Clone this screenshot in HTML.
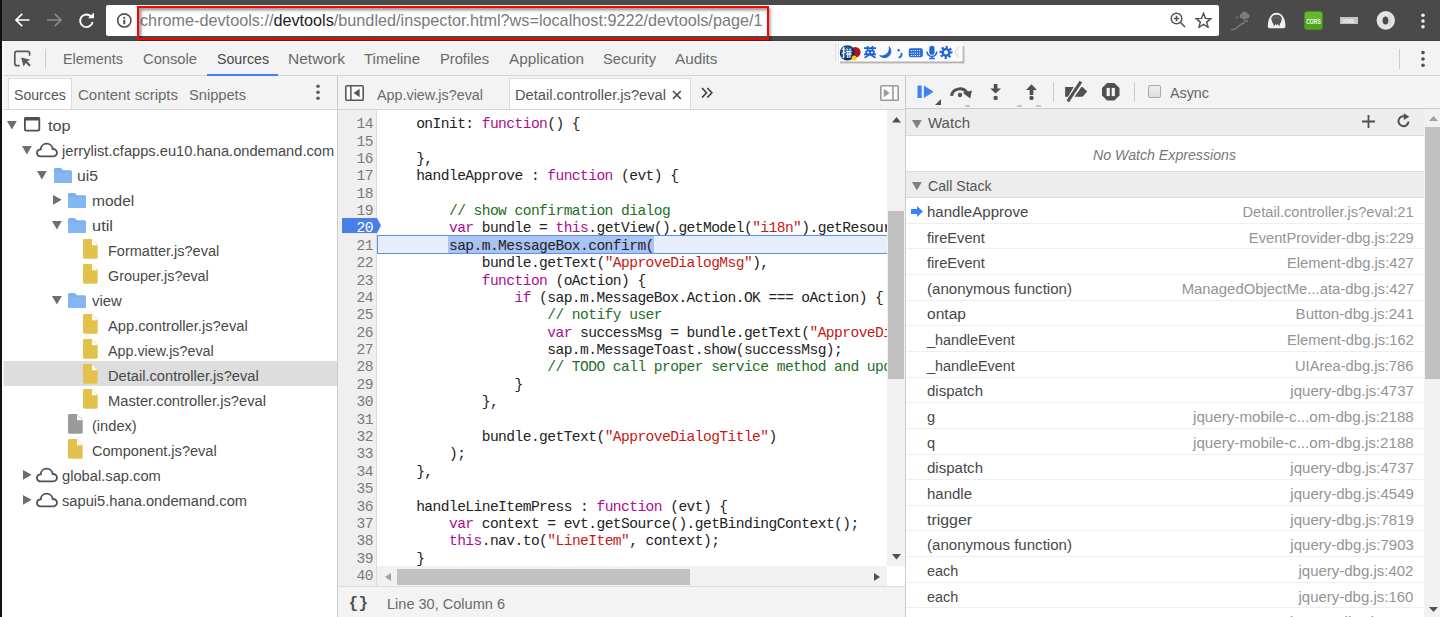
<!DOCTYPE html>
<html><head><meta charset="utf-8"><style>
html,body{margin:0;padding:0;}
body{width:1440px;height:617px;position:relative;overflow:hidden;background:#f3f3f3;font-family:'Liberation Sans', sans-serif;}
</style></head><body>
<div style="position:absolute;left:0px;top:0px;width:1440px;height:41px;background:#4a4a4a"></div>
<div style="position:absolute;left:0px;top:40px;width:1440px;height:1px;background:#3d3d3d"></div>
<svg style="position:absolute;left:14px;top:12px;" width="17" height="16" viewBox="0 0 17 16"><path d="M15.5 8H2M8.2 1.8L2 8l6.2 6.2" stroke="#fff" stroke-width="1.7" fill="none"/></svg>
<svg style="position:absolute;left:46px;top:12px;" width="17" height="16" viewBox="0 0 17 16"><path d="M1 8h13.5M8.8 1.8L15 8l-6.2 6.2" stroke="#8a8a8a" stroke-width="1.7" fill="none"/></svg>
<svg style="position:absolute;left:78px;top:12px;" width="17" height="17" viewBox="0 0 17 17"><path d="M13.6 5.2A6.3 6.3 0 1 0 14.6 10" stroke="#fff" stroke-width="1.8" fill="none"/><path d="M10 6.2h6V0.6z" fill="#fff"/></svg>
<div style="position:absolute;left:106px;top:5px;width:1113px;height:31px;background:#fff;border-radius:2px"></div>
<svg style="position:absolute;left:116px;top:12px;" width="17" height="17" viewBox="0 0 17 17"><circle cx="8.3" cy="8.4" r="6.6" stroke="#555" stroke-width="1.7" fill="none"/><rect x="7.2" y="7.8" width="2.1" height="4.4" fill="#555"/><rect x="7.2" y="4.9" width="2.1" height="1.8" fill="#555"/></svg>
<div style="position:absolute;left:139.5px;top:11.14px;line-height:18.10px;font-size:16.2px;font-family:'Liberation Sans', sans-serif;color:#333;white-space:pre;;transform:scaleX(1.0018);transform-origin:left center;"><span style="color:#7a7a7a">chrome-devtools://</span><span style="color:#222">devtools</span><span style="color:#7a7a7a">/bundled/inspector.html?ws=localhost:9222/devtools/page/1</span></div>
<div style="position:absolute;left:137px;top:5.8px;width:632px;height:34px;box-sizing:border-box;border:2.5px solid #f00;box-shadow:inset 2.5px 2.5px 2.5px rgba(0,0,0,.38),1.5px 1.5px 2px rgba(0,0,0,.3)"></div>
<svg style="position:absolute;left:1170px;top:12px;" width="16" height="17" viewBox="0 0 16 17"><circle cx="6.5" cy="6.5" r="5.3" stroke="#555" stroke-width="1.5" fill="none"/><path d="M10.3 10.3L15 15M6.5 3.8v5.4M3.8 6.5h5.4" stroke="#555" stroke-width="1.6"/></svg>
<svg style="position:absolute;left:1195px;top:12px;" width="17" height="16" viewBox="0 0 17 16"><path d="M8.5 1.3l2 5.1 5.4.3-4.2 3.4 1.4 5.2-4.6-3-4.6 3 1.4-5.2L1.1 6.7l5.4-.3z" stroke="#555" stroke-width="1.5" fill="none" stroke-linejoin="miter"/></svg>
<svg style="position:absolute;left:1229px;top:9px;" width="24" height="24" viewBox="0 0 24 24"><path d="M2 20.5C5 21 7 20 9 18S12 14.5 15.5 14" stroke="#7a7a7a" stroke-width="1.3" fill="none"/><path d="M15.5 8.5V14" stroke="#7a7a7a" stroke-width="1.2"/><circle cx="15.6" cy="5.2" r="2.7" fill="#7c7c7c"/><circle cx="13.2" cy="7" r="2.5" fill="#7c7c7c"/><circle cx="18" cy="7" r="2.5" fill="#7c7c7c"/><circle cx="15.6" cy="8" r="2.4" fill="#7c7c7c"/><circle cx="17.8" cy="12" r="1.3" fill="#777"/><circle cx="8" cy="8.6" r="1.1" fill="#777"/></svg>
<svg style="position:absolute;left:1267px;top:12px;" width="20" height="17" viewBox="0 0 20 17"><path d="M0.8 14.5C0.6 6 4.5 0.8 9.6 0.8S18.6 6 18.4 14.5Q18.4 16.3 16.6 16.3H2.6Q0.8 16.3 0.8 14.5z" fill="#f0f0f0"/><path d="M4.2 6.5C5 3.6 7 2.8 9.6 2.8S14.2 3.6 15 6.5L14 10Q12.8 11.5 12.2 14.5L10.8 12 9.6 13.5 8.4 12 7 14.5Q6.4 11.5 5.2 10z" fill="#555"/><path d="M4.6 6.5Q9.6 4.6 14.6 6.5" stroke="#6a6a6a" stroke-width="1" fill="none"/></svg>
<svg style="position:absolute;left:1303.5px;top:10.5px;" width="19" height="19" viewBox="0 0 19 19"><rect x="0.3" y="0.3" width="18.4" height="18.4" rx="3" fill="#4ea51c"/><rect x="1" y="1" width="17" height="8" rx="2.5" fill="#62b82e"/><text x="9.5" y="12.6" font-family="Liberation Sans" font-size="7.5" font-weight="bold" fill="#fff" text-anchor="middle" textLength="14.5" lengthAdjust="spacingAndGlyphs">CORS</text></svg>
<svg style="position:absolute;left:1340px;top:16.8px;" width="18.2" height="7" viewBox="0 0 18.2 7"><rect x="0" y="0" width="18.2" height="7" fill="#c4c4c4"/><text x="9.1" y="6" font-family="Liberation Sans" font-size="6" font-weight="bold" fill="#f0f0f0" text-anchor="middle" textLength="13" lengthAdjust="spacingAndGlyphs">XML</text></svg>
<svg style="position:absolute;left:1376px;top:11px;" width="20" height="20" viewBox="0 0 20 20"><ellipse cx="9.75" cy="9.45" rx="9.15" ry="9.35" fill="#e4e4e4"/><ellipse cx="9.5" cy="9.5" rx="2.9" ry="4.1" fill="#4a4a4a"/><path d="M13 3.5Q16 9.5 13 15.5" stroke="#cfcfcf" stroke-width="1.2" fill="none"/></svg>
<svg style="position:absolute;left:1419.5px;top:12px;" width="6" height="18" viewBox="0 0 6 18"><circle cx="3" cy="3.3" r="1.75" fill="#f4f4f4"/><circle cx="3" cy="9" r="1.75" fill="#f4f4f4"/><circle cx="3" cy="14.8" r="1.75" fill="#f4f4f4"/></svg>
<div style="position:absolute;left:0px;top:41px;width:1440px;height:35px;background:#f3f3f3"></div>
<div style="position:absolute;left:0px;top:75px;width:1440px;height:1.8px;background:#d6d6d6"></div>
<svg style="position:absolute;left:13px;top:50px;" width="20" height="19" viewBox="0 0 20 19"><path d="M6.7 15.6H3.8Q1.8 15.6 1.8 13.6V3.3Q1.8 1.3 3.8 1.3H14.6Q16.6 1.3 16.6 3.3V5.7" stroke="#5a5a5a" stroke-width="1.7" fill="none"/><path d="M8.1 7.6L17.4 9.8L14.2 11.3L17.8 14.9L16.3 16.5L12.7 12.9L10.6 16.8z" fill="#5a5a5a"/></svg>
<div style="position:absolute;left:45px;top:49px;width:1px;height:20px;background:#ccc"></div>
<div style="position:absolute;left:62.5px;top:50.15px;line-height:17.09px;font-size:15.3px;font-family:'Liberation Sans', sans-serif;color:#6a6a6a;white-space:pre;;transform:scaleX(0.9410);transform-origin:left center;">Elements</div>
<div style="position:absolute;left:142.5px;top:50.15px;line-height:17.09px;font-size:15.3px;font-family:'Liberation Sans', sans-serif;color:#6a6a6a;white-space:pre;;transform:scaleX(0.9622);transform-origin:left center;">Console</div>
<div style="position:absolute;left:216.5px;top:50.15px;line-height:17.09px;font-size:15.3px;font-family:'Liberation Sans', sans-serif;color:#484848;white-space:pre;;transform:scaleX(0.9267);transform-origin:left center;">Sources</div>
<div style="position:absolute;left:287.5px;top:50.15px;line-height:17.09px;font-size:15.3px;font-family:'Liberation Sans', sans-serif;color:#6a6a6a;white-space:pre;;transform:scaleX(1.0160);transform-origin:left center;">Network</div>
<div style="position:absolute;left:363.5px;top:50.15px;line-height:17.09px;font-size:15.3px;font-family:'Liberation Sans', sans-serif;color:#6a6a6a;white-space:pre;;transform:scaleX(0.9784);transform-origin:left center;">Timeline</div>
<div style="position:absolute;left:439.5px;top:50.15px;line-height:17.09px;font-size:15.3px;font-family:'Liberation Sans', sans-serif;color:#6a6a6a;white-space:pre;;transform:scaleX(0.9607);transform-origin:left center;">Profiles</div>
<div style="position:absolute;left:508.5px;top:50.15px;line-height:17.09px;font-size:15.3px;font-family:'Liberation Sans', sans-serif;color:#6a6a6a;white-space:pre;;transform:scaleX(1.0022);transform-origin:left center;">Application</div>
<div style="position:absolute;left:602.5px;top:50.15px;line-height:17.09px;font-size:15.3px;font-family:'Liberation Sans', sans-serif;color:#6a6a6a;white-space:pre;;transform:scaleX(0.9592);transform-origin:left center;">Security</div>
<div style="position:absolute;left:675.0px;top:50.15px;line-height:17.09px;font-size:15.3px;font-family:'Liberation Sans', sans-serif;color:#6a6a6a;white-space:pre;;transform:scaleX(0.9997);transform-origin:left center;">Audits</div>
<div style="position:absolute;left:207px;top:74px;width:71px;height:2px;background:#3e82f7"></div>
<div style="position:absolute;left:1398.5px;top:49px;width:1.5px;height:19.5px;background:#ccc"></div>
<svg style="position:absolute;left:1420.4px;top:50px;" width="6" height="18" viewBox="0 0 6 18"><circle cx="3" cy="2.6" r="1.8" fill="#505050"/><circle cx="3" cy="9" r="1.8" fill="#505050"/><circle cx="3" cy="15.3" r="1.8" fill="#505050"/></svg>
<svg style="position:absolute;left:834px;top:40px;" width="132" height="26" viewBox="0 0 132 26"><rect x="6" y="21.2" width="123" height="2.2" fill="#8a8a8a" opacity=".6"/><rect x="128.3" y="6" width="2.2" height="17.4" fill="#8a8a8a" opacity=".5"/>
<rect x="1.5" y="2.9" width="126.8" height="18.5" fill="#fbfbfb"/><rect x="1.5" y="2.9" width="0.8" height="18.5" fill="#d0d0d0"/><rect x="4.2" y="4" width="0.8" height="16" fill="#dddddd"/>
<circle cx="21.4" cy="12.2" r="5.2" fill="#b5121b"/><circle cx="13.4" cy="12.9" r="7.6" fill="#0f2f63"/><circle cx="12.6" cy="12" r="6" fill="#2a5a9a"/>
<path d="M8 9.2H11.2M9.7 7V17.5L8.5 16.8M8 13.4L11.5 12M12.6 8.6L13.6 10M16.6 8.6L15.6 10M12 11.2H17.6M12 14H17.6M13.8 11.2V18M15.9 11.2V18" stroke="#fff" stroke-width="1.1" fill="none"/><circle cx="20.2" cy="18" r="2.5" fill="#f5d200"/>
<path d="M30 8.2H42M33.6 6V10.3M38.4 6V10.3M32.2 11V14.2H39.8V11H32.2M36 9.6V14.2M30 14.4H42M36 14.4L30.6 17.8M36 14.4L41.6 17.8" stroke="#1a5fd6" stroke-width="1.7" fill="none"/>
<path d="M55.2 6.8A6.2 6.2 0 0 1 45.7 15.6A7.6 7.6 0 0 0 55.2 6.8Z" fill="#1f66dc" stroke="#1f66dc" stroke-width="0.9" stroke-linejoin="round"/>
<circle cx="64.7" cy="10.2" r="1.2" fill="#1f66dc"/><path d="M67.5 13.6Q67.8 16.5 65.4 17.4" stroke="#1f66dc" stroke-width="1.8" fill="none" stroke-linecap="round"/>
<rect x="74.8" y="8.3" width="14" height="9" rx="1.8" fill="#1f66dc"/><path d="M76.6 10.6h10.4M76.6 13.2h10.4M76.6 15.6h10.4" stroke="#fff" stroke-width="1" stroke-dasharray="1.2 0.9"/>
<rect x="95.3" y="5.8" width="5.2" height="9" rx="2.6" fill="#1f66dc"/><path d="M93 11.6A4.9 4.9 0 0 0 102.8 11.6M97.9 16.5v1.8M95 18.5h5.8" stroke="#1f66dc" stroke-width="1.5" fill="none"/>
<circle cx="112" cy="12.4" r="5.2" stroke="#1f66dc" stroke-width="2.6" fill="none" stroke-dasharray="2.1 1.98" transform="rotate(-11 112 12.4)"/><circle cx="112" cy="12.4" r="3.3" stroke="#1f66dc" stroke-width="2.4" fill="none"/>
<path d="M125 6L120.2 12.4L125 18.5" fill="#efefef" stroke="#d6d6d6" stroke-width="0.7"/></svg>
<div style="position:absolute;left:0px;top:76px;width:338px;height:541px;background:#fff"></div>
<div style="position:absolute;left:0px;top:76px;width:337px;height:34px;background:#f3f3f3"></div>
<div style="position:absolute;left:8px;top:78.3px;width:64px;height:31px;background:#fff;border:1px solid #dcdcdc;border-bottom:none;box-sizing:border-box"></div>
<div style="position:absolute;left:0px;top:108.6px;width:337px;height:1.4px;background:#d6d6d6"></div>
<div style="position:absolute;left:14.1px;top:85.95px;line-height:17.09px;font-size:15.3px;font-family:'Liberation Sans', sans-serif;color:#555;white-space:pre;;transform:scaleX(0.9231);transform-origin:left center;">Sources</div>
<div style="position:absolute;left:77.5px;top:85.95px;line-height:17.09px;font-size:15.3px;font-family:'Liberation Sans', sans-serif;color:#6a6a6a;white-space:pre;;transform:scaleX(0.9802);transform-origin:left center;">Content scripts</div>
<div style="position:absolute;left:188.5px;top:85.95px;line-height:17.09px;font-size:15.3px;font-family:'Liberation Sans', sans-serif;color:#6a6a6a;white-space:pre;;transform:scaleX(0.9575);transform-origin:left center;">Snippets</div>
<svg style="position:absolute;left:315px;top:84px;" width="6" height="17" viewBox="0 0 6 17"><circle cx="3" cy="2.3" r="1.8" fill="#5a5a5a"/><circle cx="3" cy="8.3" r="1.8" fill="#5a5a5a"/><circle cx="3" cy="14.3" r="1.8" fill="#5a5a5a"/></svg>
<div style="position:absolute;left:337px;top:76px;width:1px;height:541px;background:#ccc"></div>
<div style="position:absolute;left:3px;top:361px;width:334px;height:25px;background:#dddddd"></div>
<svg style="position:absolute;left:7.4px;top:121px;" width="10" height="9" viewBox="0 0 10 9"><path d="M0 0H9.8L4.9 8.5z" fill="#6e6e6e"/></svg>
<svg style="position:absolute;left:23.9px;top:117.3px;" width="17" height="15" viewBox="0 0 17 15"><rect x="0.9" y="0.9" width="14.4" height="12.8" rx="1.6" stroke="#505050" stroke-width="1.8" fill="none"/><rect x="0" y="0" width="16.2" height="3.4" rx="1.6" fill="#505050"/></svg>
<div style="position:absolute;left:47.6px;top:117.15px;line-height:17.09px;font-size:15.3px;font-family:'Liberation Sans', sans-serif;color:#484848;white-space:pre;;transform:scaleX(1.0675);transform-origin:left center;">top</div>
<svg style="position:absolute;left:22.4px;top:146px;" width="10" height="9" viewBox="0 0 10 9"><path d="M0 0H9.8L4.9 8.5z" fill="#6e6e6e"/></svg>
<svg style="position:absolute;left:34.5px;top:141.5px;" width="24" height="17" viewBox="0 0 24 17"><path d="M5.4 14.4H18.3A3.7 3.7 0 1 0 17.67 7.05A6 6 0 0 0 5.71 7.41A3.5 3.5 0 1 0 5.4 14.4Z" stroke="#505050" stroke-width="1.8" fill="none"/></svg>
<div style="position:absolute;left:61.5px;top:142.15px;line-height:17.09px;font-size:15.3px;font-family:'Liberation Sans', sans-serif;color:#484848;white-space:pre;;transform:scaleX(0.9584);transform-origin:left center;">jerrylist.cfapps.eu10.hana.ondemand.com</div>
<svg style="position:absolute;left:37.4px;top:171px;" width="10" height="9" viewBox="0 0 10 9"><path d="M0 0H9.8L4.9 8.5z" fill="#6e6e6e"/></svg>
<svg style="position:absolute;left:54.4px;top:168px;" width="18" height="15" viewBox="0 0 18 15"><path d="M0 1.6Q0 0 1.6 0H6.2Q7 0 7.5 0.6L8.8 2.2H16.4Q18 2.2 18 3.8V13.4Q18 15 16.4 15H1.6Q0 15 0 13.4z" fill="#7db0ee"/><path d="M0 4.2h18v9.2q0 1.6-1.6 1.6h-14.8Q0 15 0 13.4z" fill="#84b7f1"/></svg>
<div style="position:absolute;left:76.8px;top:167.15px;line-height:17.09px;font-size:15.3px;font-family:'Liberation Sans', sans-serif;color:#484848;white-space:pre;;transform:scaleX(1.0287);transform-origin:left center;">ui5</div>
<svg style="position:absolute;left:52.8px;top:194.8px;" width="9" height="10" viewBox="0 0 9 10"><path d="M0 0V9.7L8.7 4.85z" fill="#6e6e6e"/></svg>
<svg style="position:absolute;left:67.9px;top:193px;" width="18" height="15" viewBox="0 0 18 15"><path d="M0 1.6Q0 0 1.6 0H6.2Q7 0 7.5 0.6L8.8 2.2H16.4Q18 2.2 18 3.8V13.4Q18 15 16.4 15H1.6Q0 15 0 13.4z" fill="#7db0ee"/><path d="M0 4.2h18v9.2q0 1.6-1.6 1.6h-14.8Q0 15 0 13.4z" fill="#84b7f1"/></svg>
<div style="position:absolute;left:92.3px;top:192.15px;line-height:17.09px;font-size:15.3px;font-family:'Liberation Sans', sans-serif;color:#484848;white-space:pre;;transform:scaleX(1.0129);transform-origin:left center;">model</div>
<svg style="position:absolute;left:52.4px;top:221px;" width="10" height="9" viewBox="0 0 10 9"><path d="M0 0H9.8L4.9 8.5z" fill="#6e6e6e"/></svg>
<svg style="position:absolute;left:67.9px;top:218px;" width="18" height="15" viewBox="0 0 18 15"><path d="M0 1.6Q0 0 1.6 0H6.2Q7 0 7.5 0.6L8.8 2.2H16.4Q18 2.2 18 3.8V13.4Q18 15 16.4 15H1.6Q0 15 0 13.4z" fill="#7db0ee"/><path d="M0 4.2h18v9.2q0 1.6-1.6 1.6h-14.8Q0 15 0 13.4z" fill="#84b7f1"/></svg>
<div style="position:absolute;left:92.3px;top:217.15px;line-height:17.09px;font-size:15.3px;font-family:'Liberation Sans', sans-serif;color:#484848;white-space:pre;;transform:scaleX(1.0739);transform-origin:left center;">util</div>
<svg style="position:absolute;left:83.3px;top:239.2px;" width="15" height="20" viewBox="0 0 15 20"><path d="M1.4 0H9L14.7 5.7V18.3Q14.7 19.7 13.3 19.7H1.4Q0 19.7 0 18.3V1.4Q0 0 1.4 0z" fill="#e3c24c"/><path d="M9 0.2V6.2H14.6z" fill="#fff"/></svg>
<div style="position:absolute;left:107.5px;top:242.15px;line-height:17.09px;font-size:15.3px;font-family:'Liberation Sans', sans-serif;color:#484848;white-space:pre;;transform:scaleX(0.9478);transform-origin:left center;">Formatter.js?eval</div>
<svg style="position:absolute;left:83.3px;top:264.2px;" width="15" height="20" viewBox="0 0 15 20"><path d="M1.4 0H9L14.7 5.7V18.3Q14.7 19.7 13.3 19.7H1.4Q0 19.7 0 18.3V1.4Q0 0 1.4 0z" fill="#e3c24c"/><path d="M9 0.2V6.2H14.6z" fill="#fff"/></svg>
<div style="position:absolute;left:107.5px;top:267.15px;line-height:17.09px;font-size:15.3px;font-family:'Liberation Sans', sans-serif;color:#484848;white-space:pre;;transform:scaleX(0.9408);transform-origin:left center;">Grouper.js?eval</div>
<svg style="position:absolute;left:52.4px;top:296px;" width="10" height="9" viewBox="0 0 10 9"><path d="M0 0H9.8L4.9 8.5z" fill="#6e6e6e"/></svg>
<svg style="position:absolute;left:67.9px;top:293px;" width="18" height="15" viewBox="0 0 18 15"><path d="M0 1.6Q0 0 1.6 0H6.2Q7 0 7.5 0.6L8.8 2.2H16.4Q18 2.2 18 3.8V13.4Q18 15 16.4 15H1.6Q0 15 0 13.4z" fill="#7db0ee"/><path d="M0 4.2h18v9.2q0 1.6-1.6 1.6h-14.8Q0 15 0 13.4z" fill="#84b7f1"/></svg>
<div style="position:absolute;left:92.3px;top:292.15px;line-height:17.09px;font-size:15.3px;font-family:'Liberation Sans', sans-serif;color:#484848;white-space:pre;;transform:scaleX(0.9738);transform-origin:left center;">view</div>
<svg style="position:absolute;left:83.3px;top:314.2px;" width="15" height="20" viewBox="0 0 15 20"><path d="M1.4 0H9L14.7 5.7V18.3Q14.7 19.7 13.3 19.7H1.4Q0 19.7 0 18.3V1.4Q0 0 1.4 0z" fill="#e3c24c"/><path d="M9 0.2V6.2H14.6z" fill="#fff"/></svg>
<div style="position:absolute;left:107.5px;top:317.15px;line-height:17.09px;font-size:15.3px;font-family:'Liberation Sans', sans-serif;color:#484848;white-space:pre;;transform:scaleX(0.9608);transform-origin:left center;">App.controller.js?eval</div>
<svg style="position:absolute;left:83.3px;top:339.2px;" width="15" height="20" viewBox="0 0 15 20"><path d="M1.4 0H9L14.7 5.7V18.3Q14.7 19.7 13.3 19.7H1.4Q0 19.7 0 18.3V1.4Q0 0 1.4 0z" fill="#e3c24c"/><path d="M9 0.2V6.2H14.6z" fill="#fff"/></svg>
<div style="position:absolute;left:107.5px;top:342.15px;line-height:17.09px;font-size:15.3px;font-family:'Liberation Sans', sans-serif;color:#484848;white-space:pre;;transform:scaleX(0.9346);transform-origin:left center;">App.view.js?eval</div>
<svg style="position:absolute;left:83.3px;top:364.2px;" width="15" height="20" viewBox="0 0 15 20"><path d="M1.4 0H9L14.7 5.7V18.3Q14.7 19.7 13.3 19.7H1.4Q0 19.7 0 18.3V1.4Q0 0 1.4 0z" fill="#e3c24c"/><path d="M9 0.2V6.2H14.6z" fill="#fff"/></svg>
<div style="position:absolute;left:107.5px;top:367.15px;line-height:17.09px;font-size:15.3px;font-family:'Liberation Sans', sans-serif;color:#484848;white-space:pre;;transform:scaleX(0.9581);transform-origin:left center;">Detail.controller.js?eval</div>
<svg style="position:absolute;left:83.3px;top:389.2px;" width="15" height="20" viewBox="0 0 15 20"><path d="M1.4 0H9L14.7 5.7V18.3Q14.7 19.7 13.3 19.7H1.4Q0 19.7 0 18.3V1.4Q0 0 1.4 0z" fill="#e3c24c"/><path d="M9 0.2V6.2H14.6z" fill="#fff"/></svg>
<div style="position:absolute;left:107.5px;top:392.15px;line-height:17.09px;font-size:15.3px;font-family:'Liberation Sans', sans-serif;color:#484848;white-space:pre;;transform:scaleX(0.9629);transform-origin:left center;">Master.controller.js?eval</div>
<svg style="position:absolute;left:67.9px;top:414.2px;" width="15" height="20" viewBox="0 0 15 20"><path d="M1.4 0H9L14.7 5.7V18.3Q14.7 19.7 13.3 19.7H1.4Q0 19.7 0 18.3V1.4Q0 0 1.4 0z" fill="#9a9a9a"/><path d="M9 0.2V6.2H14.6z" fill="#fff"/></svg>
<div style="position:absolute;left:92.3px;top:417.15px;line-height:17.09px;font-size:15.3px;font-family:'Liberation Sans', sans-serif;color:#484848;white-space:pre;;transform:scaleX(0.9560);transform-origin:left center;">(index)</div>
<svg style="position:absolute;left:67.9px;top:439.2px;" width="15" height="20" viewBox="0 0 15 20"><path d="M1.4 0H9L14.7 5.7V18.3Q14.7 19.7 13.3 19.7H1.4Q0 19.7 0 18.3V1.4Q0 0 1.4 0z" fill="#e3c24c"/><path d="M9 0.2V6.2H14.6z" fill="#fff"/></svg>
<div style="position:absolute;left:92.3px;top:442.15px;line-height:17.09px;font-size:15.3px;font-family:'Liberation Sans', sans-serif;color:#484848;white-space:pre;;transform:scaleX(0.9523);transform-origin:left center;">Component.js?eval</div>
<svg style="position:absolute;left:22.799999999999997px;top:469.8px;" width="9" height="10" viewBox="0 0 9 10"><path d="M0 0V9.7L8.7 4.85z" fill="#6e6e6e"/></svg>
<svg style="position:absolute;left:34.5px;top:466.5px;" width="24" height="17" viewBox="0 0 24 17"><path d="M5.4 14.4H18.3A3.7 3.7 0 1 0 17.67 7.05A6 6 0 0 0 5.71 7.41A3.5 3.5 0 1 0 5.4 14.4Z" stroke="#505050" stroke-width="1.8" fill="none"/></svg>
<div style="position:absolute;left:62.2px;top:467.15px;line-height:17.09px;font-size:15.3px;font-family:'Liberation Sans', sans-serif;color:#484848;white-space:pre;;transform:scaleX(0.9603);transform-origin:left center;">global.sap.com</div>
<svg style="position:absolute;left:22.799999999999997px;top:494.8px;" width="9" height="10" viewBox="0 0 9 10"><path d="M0 0V9.7L8.7 4.85z" fill="#6e6e6e"/></svg>
<svg style="position:absolute;left:34.5px;top:491.5px;" width="24" height="17" viewBox="0 0 24 17"><path d="M5.4 14.4H18.3A3.7 3.7 0 1 0 17.67 7.05A6 6 0 0 0 5.71 7.41A3.5 3.5 0 1 0 5.4 14.4Z" stroke="#505050" stroke-width="1.8" fill="none"/></svg>
<div style="position:absolute;left:62.2px;top:492.15px;line-height:17.09px;font-size:15.3px;font-family:'Liberation Sans', sans-serif;color:#484848;white-space:pre;;transform:scaleX(0.9583);transform-origin:left center;">sapui5.hana.ondemand.com</div>
<div style="position:absolute;left:338px;top:76px;width:568px;height:34px;background:#f3f3f3"></div>
<svg style="position:absolute;left:345px;top:85px;" width="19" height="16" viewBox="0 0 19 16"><rect x="0.8" y="0.8" width="17.4" height="14.6" rx="1.3" stroke="#585858" stroke-width="1.6" fill="#fbfbfb"/><path d="M5.9 1v14" stroke="#585858" stroke-width="1.5"/><path d="M14.6 3.8v8.4L8.6 8z" fill="#585858"/></svg>
<div style="position:absolute;left:377.2px;top:85.85px;line-height:17.09px;font-size:15.3px;font-family:'Liberation Sans', sans-serif;color:#6a6a6a;white-space:pre;;transform:scaleX(0.9373);transform-origin:left center;">App.view.js?eval</div>
<div style="position:absolute;left:509px;top:78.3px;width:182px;height:31px;background:#fff;border:1px solid #dcdcdc;border-bottom:none;box-sizing:border-box"></div>
<div style="position:absolute;left:338px;top:108.6px;width:568px;height:1.4px;background:#d6d6d6"></div>
<div style="position:absolute;left:514.5px;top:85.85px;line-height:17.09px;font-size:15.3px;font-family:'Liberation Sans', sans-serif;color:#555;white-space:pre;;transform:scaleX(0.9600);transform-origin:left center;">Detail.controller.js?eval</div>
<svg style="position:absolute;left:672px;top:90px;" width="10" height="10" viewBox="0 0 10 10"><path d="M1 1l7.8 7.8M8.8 1L1 8.8" stroke="#505050" stroke-width="1.7"/></svg>
<svg style="position:absolute;left:700.5px;top:87px;" width="12" height="11" viewBox="0 0 12 11"><path d="M1 1l4.5 4.75-4.5 4.75M6.3 1l4.6 4.75-4.6 4.75" stroke="#444" stroke-width="1.7" fill="none"/></svg>
<svg style="position:absolute;left:880px;top:85px;" width="19" height="16" viewBox="0 0 19 16"><rect x="0.8" y="0.8" width="17.4" height="14.6" rx="1" stroke="#9c9c9c" stroke-width="1.6" fill="#fbfbfb"/><path d="M13 1v14" stroke="#9c9c9c" stroke-width="1.6"/><path d="M3.8 3.8v8.4L9.6 8z" fill="#9c9c9c"/></svg>
<div style="position:absolute;left:338px;top:110px;width:549px;height:476px;background:#fff"></div>
<div style="position:absolute;left:338px;top:110px;width:38px;height:476px;background:#efefef"></div>
<div style="position:absolute;left:376px;top:110px;width:1px;height:476px;background:#ddd"></div>
<div style="position:absolute;left:0;top:0;width:1440px;height:617px;overflow:hidden">
<div style="position:absolute;left:376.5px;top:235px;width:511px;height:19px;background:#e6eefc;border:1px solid #5a8ff0;box-sizing:border-box"></div>
<div style="position:absolute;left:448.3px;top:236px;width:206px;height:17px;background:#a9c3f3"></div>
<svg style="position:absolute;left:341.5px;top:218px;" width="40" height="16" viewBox="0 0 40 16"><path d="M0 0H35L39 7.5L35 15H0z" fill="#4b7fe8"/></svg>
</div>
<div style="position:absolute;left:338px;top:110px;width:549px;height:476px;overflow:hidden">
<div style="position:absolute;left:4.5px;top:6.15px;line-height:16.53px;font-size:14.6px;font-family:'Liberation Mono', monospace;color:#7a7a7a;white-space:pre;width:30.5px;text-align:right;letter-spacing:-0.564px">14</div>
<div style="position:absolute;left:45.39999999999998px;top:6.15px;line-height:16.53px;font-size:14.6px;font-family:'Liberation Mono', monospace;color:#222;white-space:pre;;letter-spacing:-0.564px"><span style="color:#222">    onInit: </span><span style="color:#aa0d91">function</span><span style="color:#222">() {</span></div>
<div style="position:absolute;left:4.5px;top:23.53px;line-height:16.53px;font-size:14.6px;font-family:'Liberation Mono', monospace;color:#7a7a7a;white-space:pre;width:30.5px;text-align:right;letter-spacing:-0.564px">15</div>
<div style="position:absolute;left:4.5px;top:40.91px;line-height:16.53px;font-size:14.6px;font-family:'Liberation Mono', monospace;color:#7a7a7a;white-space:pre;width:30.5px;text-align:right;letter-spacing:-0.564px">16</div>
<div style="position:absolute;left:45.39999999999998px;top:40.91px;line-height:16.53px;font-size:14.6px;font-family:'Liberation Mono', monospace;color:#222;white-space:pre;;letter-spacing:-0.564px"><span style="color:#222">    },</span></div>
<div style="position:absolute;left:4.5px;top:58.29px;line-height:16.53px;font-size:14.6px;font-family:'Liberation Mono', monospace;color:#7a7a7a;white-space:pre;width:30.5px;text-align:right;letter-spacing:-0.564px">17</div>
<div style="position:absolute;left:45.39999999999998px;top:58.29px;line-height:16.53px;font-size:14.6px;font-family:'Liberation Mono', monospace;color:#222;white-space:pre;;letter-spacing:-0.564px"><span style="color:#222">    handleApprove : </span><span style="color:#aa0d91">function</span><span style="color:#222"> (evt) {</span></div>
<div style="position:absolute;left:4.5px;top:75.67px;line-height:16.53px;font-size:14.6px;font-family:'Liberation Mono', monospace;color:#7a7a7a;white-space:pre;width:30.5px;text-align:right;letter-spacing:-0.564px">18</div>
<div style="position:absolute;left:4.5px;top:93.05px;line-height:16.53px;font-size:14.6px;font-family:'Liberation Mono', monospace;color:#7a7a7a;white-space:pre;width:30.5px;text-align:right;letter-spacing:-0.564px">19</div>
<div style="position:absolute;left:45.39999999999998px;top:93.05px;line-height:16.53px;font-size:14.6px;font-family:'Liberation Mono', monospace;color:#222;white-space:pre;;letter-spacing:-0.564px"><span style="color:#236e25">        // show confirmation dialog</span></div>
<div style="position:absolute;left:4.5px;top:110.43px;line-height:16.53px;font-size:14.6px;font-family:'Liberation Mono', monospace;color:#fff;white-space:pre;width:30.5px;text-align:right;letter-spacing:-0.564px">20</div>
<div style="position:absolute;left:45.39999999999998px;top:110.43px;line-height:16.53px;font-size:14.6px;font-family:'Liberation Mono', monospace;color:#222;white-space:pre;;letter-spacing:-0.564px"><span style="color:#222">        </span><span style="color:#aa0d91">var</span><span style="color:#222"> bundle = </span><span style="color:#aa0d91">this</span><span style="color:#222">.getView().getModel(</span><span style="color:#c41a16">&quot;i18n&quot;</span><span style="color:#222">).getResourceBundle();</span></div>
<div style="position:absolute;left:4.5px;top:127.81px;line-height:16.53px;font-size:14.6px;font-family:'Liberation Mono', monospace;color:#7a7a7a;white-space:pre;width:30.5px;text-align:right;letter-spacing:-0.564px">21</div>
<div style="position:absolute;left:45.39999999999998px;top:127.81px;line-height:16.53px;font-size:14.6px;font-family:'Liberation Mono', monospace;color:#222;white-space:pre;;letter-spacing:-0.564px"><span style="color:#222">        sap.m.MessageBox.confirm(</span></div>
<div style="position:absolute;left:4.5px;top:145.19px;line-height:16.53px;font-size:14.6px;font-family:'Liberation Mono', monospace;color:#7a7a7a;white-space:pre;width:30.5px;text-align:right;letter-spacing:-0.564px">22</div>
<div style="position:absolute;left:45.39999999999998px;top:145.19px;line-height:16.53px;font-size:14.6px;font-family:'Liberation Mono', monospace;color:#222;white-space:pre;;letter-spacing:-0.564px"><span style="color:#222">            bundle.getText(</span><span style="color:#c41a16">&quot;ApproveDialogMsg&quot;</span><span style="color:#222">),</span></div>
<div style="position:absolute;left:4.5px;top:162.57px;line-height:16.53px;font-size:14.6px;font-family:'Liberation Mono', monospace;color:#7a7a7a;white-space:pre;width:30.5px;text-align:right;letter-spacing:-0.564px">23</div>
<div style="position:absolute;left:45.39999999999998px;top:162.57px;line-height:16.53px;font-size:14.6px;font-family:'Liberation Mono', monospace;color:#222;white-space:pre;;letter-spacing:-0.564px"><span style="color:#222">            </span><span style="color:#aa0d91">function</span><span style="color:#222"> (oAction) {</span></div>
<div style="position:absolute;left:4.5px;top:179.95px;line-height:16.53px;font-size:14.6px;font-family:'Liberation Mono', monospace;color:#7a7a7a;white-space:pre;width:30.5px;text-align:right;letter-spacing:-0.564px">24</div>
<div style="position:absolute;left:45.39999999999998px;top:179.95px;line-height:16.53px;font-size:14.6px;font-family:'Liberation Mono', monospace;color:#222;white-space:pre;;letter-spacing:-0.564px"><span style="color:#222">                </span><span style="color:#aa0d91">if</span><span style="color:#222"> (sap.m.MessageBox.Action.OK === oAction) {</span></div>
<div style="position:absolute;left:4.5px;top:197.33px;line-height:16.53px;font-size:14.6px;font-family:'Liberation Mono', monospace;color:#7a7a7a;white-space:pre;width:30.5px;text-align:right;letter-spacing:-0.564px">25</div>
<div style="position:absolute;left:45.39999999999998px;top:197.33px;line-height:16.53px;font-size:14.6px;font-family:'Liberation Mono', monospace;color:#222;white-space:pre;;letter-spacing:-0.564px"><span style="color:#236e25">                    // notify user</span></div>
<div style="position:absolute;left:4.5px;top:214.71px;line-height:16.53px;font-size:14.6px;font-family:'Liberation Mono', monospace;color:#7a7a7a;white-space:pre;width:30.5px;text-align:right;letter-spacing:-0.564px">26</div>
<div style="position:absolute;left:45.39999999999998px;top:214.71px;line-height:16.53px;font-size:14.6px;font-family:'Liberation Mono', monospace;color:#222;white-space:pre;;letter-spacing:-0.564px"><span style="color:#222">                    </span><span style="color:#aa0d91">var</span><span style="color:#222"> successMsg = bundle.getText(</span><span style="color:#c41a16">&quot;ApproveDialogSuccessMsg&quot;</span><span style="color:#222">);</span></div>
<div style="position:absolute;left:4.5px;top:232.09px;line-height:16.53px;font-size:14.6px;font-family:'Liberation Mono', monospace;color:#7a7a7a;white-space:pre;width:30.5px;text-align:right;letter-spacing:-0.564px">27</div>
<div style="position:absolute;left:45.39999999999998px;top:232.09px;line-height:16.53px;font-size:14.6px;font-family:'Liberation Mono', monospace;color:#222;white-space:pre;;letter-spacing:-0.564px"><span style="color:#222">                    sap.m.MessageToast.show(successMsg);</span></div>
<div style="position:absolute;left:4.5px;top:249.47px;line-height:16.53px;font-size:14.6px;font-family:'Liberation Mono', monospace;color:#7a7a7a;white-space:pre;width:30.5px;text-align:right;letter-spacing:-0.564px">28</div>
<div style="position:absolute;left:45.39999999999998px;top:249.47px;line-height:16.53px;font-size:14.6px;font-family:'Liberation Mono', monospace;color:#222;white-space:pre;;letter-spacing:-0.564px"><span style="color:#236e25">                    // TODO call proper service method and update model</span></div>
<div style="position:absolute;left:4.5px;top:266.85px;line-height:16.53px;font-size:14.6px;font-family:'Liberation Mono', monospace;color:#7a7a7a;white-space:pre;width:30.5px;text-align:right;letter-spacing:-0.564px">29</div>
<div style="position:absolute;left:45.39999999999998px;top:266.85px;line-height:16.53px;font-size:14.6px;font-family:'Liberation Mono', monospace;color:#222;white-space:pre;;letter-spacing:-0.564px"><span style="color:#222">                }</span></div>
<div style="position:absolute;left:4.5px;top:284.23px;line-height:16.53px;font-size:14.6px;font-family:'Liberation Mono', monospace;color:#7a7a7a;white-space:pre;width:30.5px;text-align:right;letter-spacing:-0.564px">30</div>
<div style="position:absolute;left:45.39999999999998px;top:284.23px;line-height:16.53px;font-size:14.6px;font-family:'Liberation Mono', monospace;color:#222;white-space:pre;;letter-spacing:-0.564px"><span style="color:#222">            },</span></div>
<div style="position:absolute;left:4.5px;top:301.61px;line-height:16.53px;font-size:14.6px;font-family:'Liberation Mono', monospace;color:#7a7a7a;white-space:pre;width:30.5px;text-align:right;letter-spacing:-0.564px">31</div>
<div style="position:absolute;left:4.5px;top:318.99px;line-height:16.53px;font-size:14.6px;font-family:'Liberation Mono', monospace;color:#7a7a7a;white-space:pre;width:30.5px;text-align:right;letter-spacing:-0.564px">32</div>
<div style="position:absolute;left:45.39999999999998px;top:318.99px;line-height:16.53px;font-size:14.6px;font-family:'Liberation Mono', monospace;color:#222;white-space:pre;;letter-spacing:-0.564px"><span style="color:#222">            bundle.getText(</span><span style="color:#c41a16">&quot;ApproveDialogTitle&quot;</span><span style="color:#222">)</span></div>
<div style="position:absolute;left:4.5px;top:336.37px;line-height:16.53px;font-size:14.6px;font-family:'Liberation Mono', monospace;color:#7a7a7a;white-space:pre;width:30.5px;text-align:right;letter-spacing:-0.564px">33</div>
<div style="position:absolute;left:45.39999999999998px;top:336.37px;line-height:16.53px;font-size:14.6px;font-family:'Liberation Mono', monospace;color:#222;white-space:pre;;letter-spacing:-0.564px"><span style="color:#222">        );</span></div>
<div style="position:absolute;left:4.5px;top:353.75px;line-height:16.53px;font-size:14.6px;font-family:'Liberation Mono', monospace;color:#7a7a7a;white-space:pre;width:30.5px;text-align:right;letter-spacing:-0.564px">34</div>
<div style="position:absolute;left:45.39999999999998px;top:353.75px;line-height:16.53px;font-size:14.6px;font-family:'Liberation Mono', monospace;color:#222;white-space:pre;;letter-spacing:-0.564px"><span style="color:#222">    },</span></div>
<div style="position:absolute;left:4.5px;top:371.13px;line-height:16.53px;font-size:14.6px;font-family:'Liberation Mono', monospace;color:#7a7a7a;white-space:pre;width:30.5px;text-align:right;letter-spacing:-0.564px">35</div>
<div style="position:absolute;left:4.5px;top:388.51px;line-height:16.53px;font-size:14.6px;font-family:'Liberation Mono', monospace;color:#7a7a7a;white-space:pre;width:30.5px;text-align:right;letter-spacing:-0.564px">36</div>
<div style="position:absolute;left:45.39999999999998px;top:388.51px;line-height:16.53px;font-size:14.6px;font-family:'Liberation Mono', monospace;color:#222;white-space:pre;;letter-spacing:-0.564px"><span style="color:#222">    handleLineItemPress : </span><span style="color:#aa0d91">function</span><span style="color:#222"> (evt) {</span></div>
<div style="position:absolute;left:4.5px;top:405.89px;line-height:16.53px;font-size:14.6px;font-family:'Liberation Mono', monospace;color:#7a7a7a;white-space:pre;width:30.5px;text-align:right;letter-spacing:-0.564px">37</div>
<div style="position:absolute;left:45.39999999999998px;top:405.89px;line-height:16.53px;font-size:14.6px;font-family:'Liberation Mono', monospace;color:#222;white-space:pre;;letter-spacing:-0.564px"><span style="color:#222">        </span><span style="color:#aa0d91">var</span><span style="color:#222"> context = evt.getSource().getBindingContext();</span></div>
<div style="position:absolute;left:4.5px;top:423.27px;line-height:16.53px;font-size:14.6px;font-family:'Liberation Mono', monospace;color:#7a7a7a;white-space:pre;width:30.5px;text-align:right;letter-spacing:-0.564px">38</div>
<div style="position:absolute;left:45.39999999999998px;top:423.27px;line-height:16.53px;font-size:14.6px;font-family:'Liberation Mono', monospace;color:#222;white-space:pre;;letter-spacing:-0.564px"><span style="color:#222">        </span><span style="color:#aa0d91">this</span><span style="color:#222">.nav.to(</span><span style="color:#c41a16">&quot;LineItem&quot;</span><span style="color:#222">, context);</span></div>
<div style="position:absolute;left:4.5px;top:440.65px;line-height:16.53px;font-size:14.6px;font-family:'Liberation Mono', monospace;color:#7a7a7a;white-space:pre;width:30.5px;text-align:right;letter-spacing:-0.564px">39</div>
<div style="position:absolute;left:45.39999999999998px;top:440.65px;line-height:16.53px;font-size:14.6px;font-family:'Liberation Mono', monospace;color:#222;white-space:pre;;letter-spacing:-0.564px"><span style="color:#222">    }</span></div>
<div style="position:absolute;left:4.5px;top:458.03px;line-height:16.53px;font-size:14.6px;font-family:'Liberation Mono', monospace;color:#7a7a7a;white-space:pre;width:30.5px;text-align:right;letter-spacing:-0.564px">40</div>
</div>
<div style="position:absolute;left:887px;top:110px;width:19px;height:456px;background:#f1f1f1"></div>
<svg style="position:absolute;left:891.5px;top:116.5px;" width="9" height="6" viewBox="0 0 9 6"><path d="M0 5.5L4.5 0 9 5.5z" fill="#505050"/></svg>
<div style="position:absolute;left:888px;top:211px;width:16px;height:168px;background:#c1c1c1"></div>
<svg style="position:absolute;left:891.5px;top:553.5px;" width="9" height="6" viewBox="0 0 9 6"><path d="M0 0L4.5 5.5 9 0z" fill="#505050"/></svg>
<div style="position:absolute;left:377px;top:566px;width:510px;height:20px;background:#f1f1f1"></div>
<svg style="position:absolute;left:384.5px;top:572.5px;" width="6" height="8" viewBox="0 0 6 8"><path d="M6 0v8L0 4z" fill="#a0a0a0"/></svg>
<div style="position:absolute;left:397px;top:568.5px;width:293px;height:16px;background:#c1c1c1"></div>
<svg style="position:absolute;left:873.5px;top:572.5px;" width="6" height="8" viewBox="0 0 6 8"><path d="M0 0v8L6 4z" fill="#505050"/></svg>
<div style="position:absolute;left:887px;top:566px;width:19px;height:20px;background:#fff"></div>
<div style="position:absolute;left:338px;top:586px;width:568px;height:31px;background:#f3f3f3"></div>
<div style="position:absolute;left:338px;top:586px;width:568px;height:1px;background:#ddd"></div>
<div style="position:absolute;left:348.5px;top:594.98px;line-height:18.12px;font-size:16px;font-family:'Liberation Mono', monospace;color:#505050;white-space:pre;font-weight:bold;letter-spacing:0.3px">{}</div>
<div style="position:absolute;left:386.7px;top:594.95px;line-height:17.09px;font-size:15.3px;font-family:'Liberation Sans', sans-serif;color:#6a6a6a;white-space:pre;;transform:scaleX(0.9504);transform-origin:left center;">Line 30, Column 6</div>
<div style="position:absolute;left:905px;top:76px;width:1px;height:541px;background:#ccc"></div>
<div style="position:absolute;left:906px;top:76px;width:534px;height:33px;background:#f3f3f3"></div>
<div style="position:absolute;left:906px;top:108px;width:534px;height:1px;background:#ccc"></div>
<svg style="position:absolute;left:917px;top:85px;" width="25" height="21" viewBox="0 0 25 21"><rect x="0.5" y="0.5" width="4.2" height="12.5" fill="#3e82f7"/><path d="M6.8 0.5v12.5l9.8-6.25z" fill="#3e82f7"/><path d="M24 14v6h-6z" fill="#505050"/></svg>
<svg style="position:absolute;left:949px;top:84px;" width="25" height="16" viewBox="0 0 25 16"><path d="M2.6 11.8A8.2 7.6 0 0 1 17.8 8.6" stroke="#505050" stroke-width="3" fill="none"/><path d="M13.6 8.8L22.8 6.6L21.2 14.6z" fill="#505050"/><circle cx="11" cy="11" r="2.2" fill="#505050"/></svg>
<svg style="position:absolute;left:990px;top:84px;" width="11" height="17" viewBox="0 0 11 17"><path d="M5.6 0v6.5" stroke="#505050" stroke-width="3.7"/><path d="M0.2 4.6h10.8L5.6 9.6z" fill="#505050"/><circle cx="5.6" cy="13.9" r="2.2" fill="#505050"/></svg>
<svg style="position:absolute;left:1025.5px;top:84px;" width="11" height="17" viewBox="0 0 11 17"><path d="M5.5 5v6" stroke="#505050" stroke-width="3.7"/><path d="M0 6.1h10.9L5.5 0.3z" fill="#505050"/><circle cx="5.5" cy="13.9" r="2.2" fill="#505050"/></svg>
<div style="position:absolute;left:964.5px;top:105.3px;width:5px;height:1.4px;background:#c8c8c8"></div>
<div style="position:absolute;left:1017px;top:105.3px;width:5px;height:1.4px;background:#c8c8c8"></div>
<div style="position:absolute;left:1035.5px;top:105.3px;width:5px;height:1.4px;background:#c8c8c8"></div>
<div style="position:absolute;left:1053px;top:82px;width:1px;height:20px;background:#ccc"></div>
<svg style="position:absolute;left:1064px;top:80px;" width="25" height="23" viewBox="0 0 25 23"><path d="M1.1 7H9.6L4 16.7H1.1z" fill="#505050"/><path d="M10.6 16.7L17.4 7H18.6L23.2 11.6L18.6 16.7z" fill="#505050"/><path d="M16.9 1.6L3.8 21.3" stroke="#505050" stroke-width="3"/></svg>
<svg style="position:absolute;left:1102.3px;top:83.1px;" width="18" height="18" viewBox="0 0 18 18"><path d="M5.1 0H12.4L17.5 5.1V12.4L12.4 17.5H5.1L0 12.4V5.1z" fill="#505050"/><rect x="4.6" y="4.9" width="3.2" height="8.2" fill="#f3f3f3"/><rect x="9.7" y="4.9" width="3.2" height="8.2" fill="#f3f3f3"/></svg>
<div style="position:absolute;left:1134px;top:82px;width:1px;height:20px;background:#ccc"></div>
<div style="position:absolute;left:1147.5px;top:85px;width:13px;height:13px;background:linear-gradient(#eee,#ddd);border:1px solid #aaa;border-radius:2px;box-sizing:border-box"></div>
<div style="position:absolute;left:1169.5px;top:83.85px;line-height:17.09px;font-size:15.3px;font-family:'Liberation Sans', sans-serif;color:#666;white-space:pre;;transform:scaleX(0.9362);transform-origin:left center;">Async</div>
<div style="position:absolute;left:906px;top:109px;width:518px;height:26px;background:#ededed"></div>
<div style="position:absolute;left:906px;top:135px;width:518px;height:1px;background:#dadada"></div>
<svg style="position:absolute;left:911.5px;top:119.5px;" width="10" height="9" viewBox="0 0 10 9"><path d="M0 0H9.8L4.9 8.5z" fill="#808080"/></svg>
<div style="position:absolute;left:927.5px;top:114.15px;line-height:17.09px;font-size:15.3px;font-family:'Liberation Sans', sans-serif;color:#555;white-space:pre;;transform:scaleX(0.9817);transform-origin:left center;">Watch</div>
<svg style="position:absolute;left:1362px;top:114.5px;" width="13" height="13" viewBox="0 0 13 13"><path d="M6.5 0v13M0 6.5h13" stroke="#505050" stroke-width="1.8"/></svg>
<svg style="position:absolute;left:1397px;top:113px;" width="14" height="15" viewBox="0 0 14 15"><path d="M11.5 8.5A5 5 0 1 1 8.5 3.6" stroke="#505050" stroke-width="2" fill="none"/><path d="M6.8 0.2l5.5 3.6-5.5 3.2z" fill="#505050"/></svg>
<div style="position:absolute;left:906px;top:136px;width:518px;height:35px;background:#fff"></div>
<div style="position:absolute;left:1092.5px;top:145.55px;line-height:17.09px;font-size:15.3px;font-family:'Liberation Sans', sans-serif;color:#777;white-space:pre;font-style:italic;transform:scaleX(0.9259);transform-origin:left center;">No Watch Expressions</div>
<div style="position:absolute;left:906px;top:171px;width:518px;height:27px;background:#ededed"></div>
<div style="position:absolute;left:906px;top:171px;width:518px;height:1px;background:#dadada"></div>
<div style="position:absolute;left:906px;top:197px;width:518px;height:1px;background:#dadada"></div>
<svg style="position:absolute;left:911.5px;top:182px;" width="10" height="9" viewBox="0 0 10 9"><path d="M0 0H9.8L4.9 8.5z" fill="#808080"/></svg>
<div style="position:absolute;left:927.5px;top:176.65px;line-height:17.09px;font-size:15.3px;font-family:'Liberation Sans', sans-serif;color:#555;white-space:pre;;transform:scaleX(0.9236);transform-origin:left center;">Call Stack</div>
<div style="position:absolute;left:906px;top:198px;width:518px;height:419px;background:#fff"></div>
<div style="position:absolute;left:906px;top:223px;width:518px;height:1px;background:#efefef"></div>
<div style="position:absolute;left:926.5px;top:202.85px;line-height:17.09px;font-size:15.3px;font-family:'Liberation Sans', sans-serif;color:#484848;white-space:pre;;transform:scaleX(0.9844);transform-origin:left center;">handleApprove</div>
<div style="position:absolute;right:26.299999999999955px;top:202.85px;line-height:17.09px;font-size:15.3px;font-family:'Liberation Sans', sans-serif;color:#949494;white-space:pre;;transform:scaleX(0.9582);transform-origin:right center;">Detail.controller.js?eval:21</div>
<div style="position:absolute;left:906px;top:248px;width:518px;height:1px;background:#efefef"></div>
<div style="position:absolute;left:926.5px;top:228.50px;line-height:17.09px;font-size:15.3px;font-family:'Liberation Sans', sans-serif;color:#484848;white-space:pre;;transform:scaleX(0.9575);transform-origin:left center;">fireEvent</div>
<div style="position:absolute;right:26.299999999999955px;top:228.50px;line-height:17.09px;font-size:15.3px;font-family:'Liberation Sans', sans-serif;color:#949494;white-space:pre;;transform:scaleX(0.9601);transform-origin:right center;">EventProvider-dbg.js:229</div>
<div style="position:absolute;left:906px;top:274px;width:518px;height:1px;background:#efefef"></div>
<div style="position:absolute;left:926.5px;top:254.15px;line-height:17.09px;font-size:15.3px;font-family:'Liberation Sans', sans-serif;color:#484848;white-space:pre;;transform:scaleX(0.9575);transform-origin:left center;">fireEvent</div>
<div style="position:absolute;right:26.299999999999955px;top:254.15px;line-height:17.09px;font-size:15.3px;font-family:'Liberation Sans', sans-serif;color:#949494;white-space:pre;;transform:scaleX(0.9628);transform-origin:right center;">Element-dbg.js:427</div>
<div style="position:absolute;left:906px;top:300px;width:518px;height:1px;background:#efefef"></div>
<div style="position:absolute;left:926.5px;top:279.80px;line-height:17.09px;font-size:15.3px;font-family:'Liberation Sans', sans-serif;color:#484848;white-space:pre;;transform:scaleX(0.9857);transform-origin:left center;">(anonymous function)</div>
<div style="position:absolute;right:26.299999999999955px;top:279.80px;line-height:17.09px;font-size:15.3px;font-family:'Liberation Sans', sans-serif;color:#949494;white-space:pre;;transform:scaleX(0.9722);transform-origin:right center;">ManagedObjectMe...ata-dbg.js:427</div>
<div style="position:absolute;left:906px;top:325px;width:518px;height:1px;background:#efefef"></div>
<div style="position:absolute;left:926.5px;top:305.45px;line-height:17.09px;font-size:15.3px;font-family:'Liberation Sans', sans-serif;color:#484848;white-space:pre;;transform:scaleX(1.0188);transform-origin:left center;">ontap</div>
<div style="position:absolute;right:26.299999999999955px;top:305.45px;line-height:17.09px;font-size:15.3px;font-family:'Liberation Sans', sans-serif;color:#949494;white-space:pre;;transform:scaleX(0.9866);transform-origin:right center;">Button-dbg.js:241</div>
<div style="position:absolute;left:906px;top:351px;width:518px;height:1px;background:#efefef"></div>
<div style="position:absolute;left:926.5px;top:331.10px;line-height:17.09px;font-size:15.3px;font-family:'Liberation Sans', sans-serif;color:#484848;white-space:pre;;transform:scaleX(0.9374);transform-origin:left center;">_handleEvent</div>
<div style="position:absolute;right:26.299999999999955px;top:331.10px;line-height:17.09px;font-size:15.3px;font-family:'Liberation Sans', sans-serif;color:#949494;white-space:pre;;transform:scaleX(0.9628);transform-origin:right center;">Element-dbg.js:162</div>
<div style="position:absolute;left:906px;top:377px;width:518px;height:1px;background:#efefef"></div>
<div style="position:absolute;left:926.5px;top:356.75px;line-height:17.09px;font-size:15.3px;font-family:'Liberation Sans', sans-serif;color:#484848;white-space:pre;;transform:scaleX(0.9374);transform-origin:left center;">_handleEvent</div>
<div style="position:absolute;right:26.299999999999955px;top:356.75px;line-height:17.09px;font-size:15.3px;font-family:'Liberation Sans', sans-serif;color:#949494;white-space:pre;;transform:scaleX(0.9595);transform-origin:right center;">UIArea-dbg.js:786</div>
<div style="position:absolute;left:906px;top:402px;width:518px;height:1px;background:#efefef"></div>
<div style="position:absolute;left:926.5px;top:382.40px;line-height:17.09px;font-size:15.3px;font-family:'Liberation Sans', sans-serif;color:#484848;white-space:pre;;transform:scaleX(0.9829);transform-origin:left center;">dispatch</div>
<div style="position:absolute;right:26.299999999999955px;top:382.40px;line-height:17.09px;font-size:15.3px;font-family:'Liberation Sans', sans-serif;color:#949494;white-space:pre;;transform:scaleX(0.9813);transform-origin:right center;">jquery-dbg.js:4737</div>
<div style="position:absolute;left:906px;top:428px;width:518px;height:1px;background:#efefef"></div>
<div style="position:absolute;left:926.5px;top:408.05px;line-height:17.09px;font-size:15.3px;font-family:'Liberation Sans', sans-serif;color:#484848;white-space:pre;transform:scaleX(0.9542);transform-origin:left center">g</div>
<div style="position:absolute;right:26.299999999999955px;top:408.05px;line-height:17.09px;font-size:15.3px;font-family:'Liberation Sans', sans-serif;color:#949494;white-space:pre;;transform:scaleX(0.9908);transform-origin:right center;">jquery-mobile-c...om-dbg.js:2188</div>
<div style="position:absolute;left:906px;top:454px;width:518px;height:1px;background:#efefef"></div>
<div style="position:absolute;left:926.5px;top:433.70px;line-height:17.09px;font-size:15.3px;font-family:'Liberation Sans', sans-serif;color:#484848;white-space:pre;transform:scaleX(0.9542);transform-origin:left center">q</div>
<div style="position:absolute;right:26.299999999999955px;top:433.70px;line-height:17.09px;font-size:15.3px;font-family:'Liberation Sans', sans-serif;color:#949494;white-space:pre;;transform:scaleX(0.9908);transform-origin:right center;">jquery-mobile-c...om-dbg.js:2188</div>
<div style="position:absolute;left:906px;top:479px;width:518px;height:1px;background:#efefef"></div>
<div style="position:absolute;left:926.5px;top:459.35px;line-height:17.09px;font-size:15.3px;font-family:'Liberation Sans', sans-serif;color:#484848;white-space:pre;;transform:scaleX(0.9829);transform-origin:left center;">dispatch</div>
<div style="position:absolute;right:26.299999999999955px;top:459.35px;line-height:17.09px;font-size:15.3px;font-family:'Liberation Sans', sans-serif;color:#949494;white-space:pre;;transform:scaleX(0.9813);transform-origin:right center;">jquery-dbg.js:4737</div>
<div style="position:absolute;left:906px;top:505px;width:518px;height:1px;background:#efefef"></div>
<div style="position:absolute;left:926.5px;top:485.00px;line-height:17.09px;font-size:15.3px;font-family:'Liberation Sans', sans-serif;color:#484848;white-space:pre;;transform:scaleX(0.9796);transform-origin:left center;">handle</div>
<div style="position:absolute;right:26.299999999999955px;top:485.00px;line-height:17.09px;font-size:15.3px;font-family:'Liberation Sans', sans-serif;color:#949494;white-space:pre;;transform:scaleX(0.9813);transform-origin:right center;">jquery-dbg.js:4549</div>
<div style="position:absolute;left:906px;top:530px;width:518px;height:1px;background:#efefef"></div>
<div style="position:absolute;left:926.5px;top:510.65px;line-height:17.09px;font-size:15.3px;font-family:'Liberation Sans', sans-serif;color:#484848;white-space:pre;;transform:scaleX(1.0379);transform-origin:left center;">trigger</div>
<div style="position:absolute;right:26.299999999999955px;top:510.65px;line-height:17.09px;font-size:15.3px;font-family:'Liberation Sans', sans-serif;color:#949494;white-space:pre;;transform:scaleX(0.9813);transform-origin:right center;">jquery-dbg.js:7819</div>
<div style="position:absolute;left:906px;top:556px;width:518px;height:1px;background:#efefef"></div>
<div style="position:absolute;left:926.5px;top:536.30px;line-height:17.09px;font-size:15.3px;font-family:'Liberation Sans', sans-serif;color:#484848;white-space:pre;;transform:scaleX(0.9857);transform-origin:left center;">(anonymous function)</div>
<div style="position:absolute;right:26.299999999999955px;top:536.30px;line-height:17.09px;font-size:15.3px;font-family:'Liberation Sans', sans-serif;color:#949494;white-space:pre;;transform:scaleX(0.9813);transform-origin:right center;">jquery-dbg.js:7903</div>
<div style="position:absolute;left:906px;top:582px;width:518px;height:1px;background:#efefef"></div>
<div style="position:absolute;left:926.5px;top:561.95px;line-height:17.09px;font-size:15.3px;font-family:'Liberation Sans', sans-serif;color:#484848;white-space:pre;;transform:scaleX(0.9436);transform-origin:left center;">each</div>
<div style="position:absolute;right:26.299999999999955px;top:561.95px;line-height:17.09px;font-size:15.3px;font-family:'Liberation Sans', sans-serif;color:#949494;white-space:pre;;transform:scaleX(0.9783);transform-origin:right center;">jquery-dbg.js:402</div>
<div style="position:absolute;left:906px;top:607px;width:518px;height:1px;background:#efefef"></div>
<div style="position:absolute;left:926.5px;top:587.60px;line-height:17.09px;font-size:15.3px;font-family:'Liberation Sans', sans-serif;color:#484848;white-space:pre;;transform:scaleX(0.9436);transform-origin:left center;">each</div>
<div style="position:absolute;right:26.299999999999955px;top:587.60px;line-height:17.09px;font-size:15.3px;font-family:'Liberation Sans', sans-serif;color:#949494;white-space:pre;;transform:scaleX(0.9783);transform-origin:right center;">jquery-dbg.js:160</div>
<div style="position:absolute;left:906px;top:633px;width:518px;height:1px;background:#efefef"></div>
<div style="position:absolute;left:926.5px;top:613.25px;line-height:17.09px;font-size:15.3px;font-family:'Liberation Sans', sans-serif;color:#484848;white-space:pre;transform:scaleX(0.9542);transform-origin:left center">map</div>
<div style="position:absolute;right:26.299999999999955px;top:613.25px;line-height:17.09px;font-size:15.3px;font-family:'Liberation Sans', sans-serif;color:#949494;white-space:pre;;transform:scaleX(1.0524);transform-origin:right center;">jquery-dbg.js:185</div>
<svg style="position:absolute;left:910.5px;top:205.5px;" width="12" height="11" viewBox="0 0 12 11"><path d="M0 3h6V0l6 5.5-6 5.5V8H0z" fill="#3e82f7"/></svg>
<div style="position:absolute;left:1424px;top:109px;width:16px;height:508px;background:#f1f1f1"></div>
<svg style="position:absolute;left:1428.5px;top:116px;" width="9" height="5" viewBox="0 0 9 5"><path d="M0 5L4.5 0 9 5z" fill="#a0a0a0"/></svg>
<div style="position:absolute;left:1425px;top:127px;width:15px;height:252px;background:#c1c1c1"></div>
<svg style="position:absolute;left:1428.5px;top:607px;" width="9" height="5" viewBox="0 0 9 5"><path d="M0 0L4.5 5 9 0z" fill="#505050"/></svg>
<div style="position:absolute;left:0px;top:0px;width:2px;height:617px;background:#111"></div>
<div style="position:absolute;left:2px;top:41px;width:2px;height:576px;background:#fbfbfb;opacity:.6"></div>
</body></html>
